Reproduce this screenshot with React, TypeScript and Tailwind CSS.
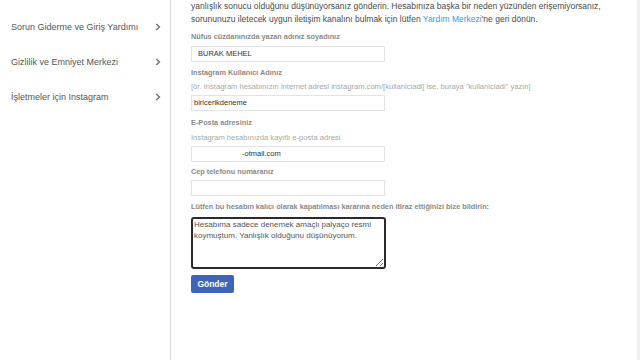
const font = { fontFamily: '"Liberation Sans", Arial, sans-serif' };

function Chevron() {
  return (
    <svg width="6" height="8" viewBox="0 0 6 8" className="shrink-0 mt-[2px]">
      <path d="M1.2 1 L4.4 4 L1.2 7" fill="none" stroke="#777" strokeWidth="1.5" />
    </svg>
  );
}

const menu = [
  "Sorun Giderme ve Giriş Yardımı",
  "Gizlilik ve Emniyet Merkezi",
  "İşletmeler için Instagram",
];

function Label({ children }: { children: React.ReactNode }) {
  return <div className="text-[7.3px] font-bold text-[#8a8a8a] leading-[12px] whitespace-nowrap">{children}</div>;
}

type FieldProps = {
  label: string;
  hint?: string;
  value?: string;
  valueClass?: string;
  wrapClass?: string;
  hintClass?: string;
  inputClass?: string;
};

function Field({ label, hint, value, valueClass, wrapClass, hintClass, inputClass }: FieldProps) {
  return (
    <div className={`flex flex-col ${wrapClass ?? ""}`}>
      <Label>{label}</Label>
      {hint && <div className={`text-[7.6px] text-[#a8a8a8] leading-[12px] whitespace-nowrap ${hintClass ?? ""}`}>{hint}</div>}
      <div className={`h-[16px] w-[194px] border border-[#e3e3e3] bg-white flex items-center text-[7.5px] text-[#333] ${inputClass ?? ""}`}>
        <span className={valueClass}>{value}</span>
      </div>
    </div>
  );
}

export default function App() {
  return (
    <div className="w-[640px] h-[360px] bg-white flex overflow-hidden" style={font}>
      <aside className="w-[171px] h-full border-r border-[#dcdcdc] flex flex-col pt-[19px]">
        {menu.map((m) => (
          <div key={m} className="h-[35px] flex items-start justify-between pl-[11px] pr-[9px] pt-[2px]">
            <span className="text-[9px] text-[#555] leading-[12px]">{m}</span>
            <Chevron />
          </div>
        ))}
      </aside>
      <main className="flex-1 pl-[20px] pr-[20px]">
        <p className="text-[8.5px] leading-[13px] text-[#4a4a4a] whitespace-nowrap">
          yanlışlık sonucu olduğunu düşünüyorsanız gönderin. Hesabınıza başka bir neden yüzünden erişemiyorsanız,
          <br />
          sorununuzu iletecek uygun iletişim kanalını bulmak için lütfen{" "}
          <span className="text-[#3897f0]">Yardım Merkezi</span>'ne geri dönün.
        </p>
        <div className="flex flex-col">
          <Field
            label="Nüfus cüzdanınızda yazan adınız soyadınız"
            value="BURAK MEHEL"
            valueClass="ml-[6px]"
            wrapClass="mt-[5px]"
            inputClass="mt-[3px]"
          />
          <Field
            label="Instagram Kullanıcı Adınız"
            hint={'[ör. Instagram hesabınızın internet adresi instagram.com/[kullaniciadi] ise, buraya "kullaniciadi" yazın]'}
            value="biricerikdeneme"
            valueClass="ml-[2px]"
            wrapClass="mt-[5px]"
            hintClass="mt-[2px]"
            inputClass="mt-[2px]"
          />
          <Field
            label="E-Posta adresiniz"
            hint="Instagram hesabınızda kayıtlı e-posta adresi"
            value="-otmail.com"
            valueClass="ml-[50px]"
            wrapClass="mt-[6px]"
            hintClass="mt-[3px]"
            inputClass="mt-[2px]"
          />
          <Field label="Cep telefonu numaranız" wrapClass="mt-[4px]" inputClass="mt-[2px]" />
          <div className="flex flex-col mt-[5px]">
            <Label>Lütfen bu hesabın kalıcı olarak kapatılması kararına neden itiraz ettiğinizi bize bildirin:</Label>
            <textarea
              className="mt-[4px] w-[195px] h-[52px] border-2 border-[#2a2a2a] rounded-[3px] px-[1px] py-0 text-[8px] leading-[11px] text-[#555] outline-none resize-y"
              style={font}
              defaultValue={"Hesabıma sadece denemek amaçlı palyaço resmi\nkoymuştum. Yanlışlık olduğunu düşünüyorum."}
            />
          </div>
          <button className="self-start mt-[6px] w-[43px] h-[18px] rounded-[2px] bg-[#3d64b8] text-white text-[8.5px] font-bold">
            Gönder
          </button>
        </div>
      </main>
      <div className="w-[3px] h-full bg-[#efefef]" />
    </div>
  );
}
